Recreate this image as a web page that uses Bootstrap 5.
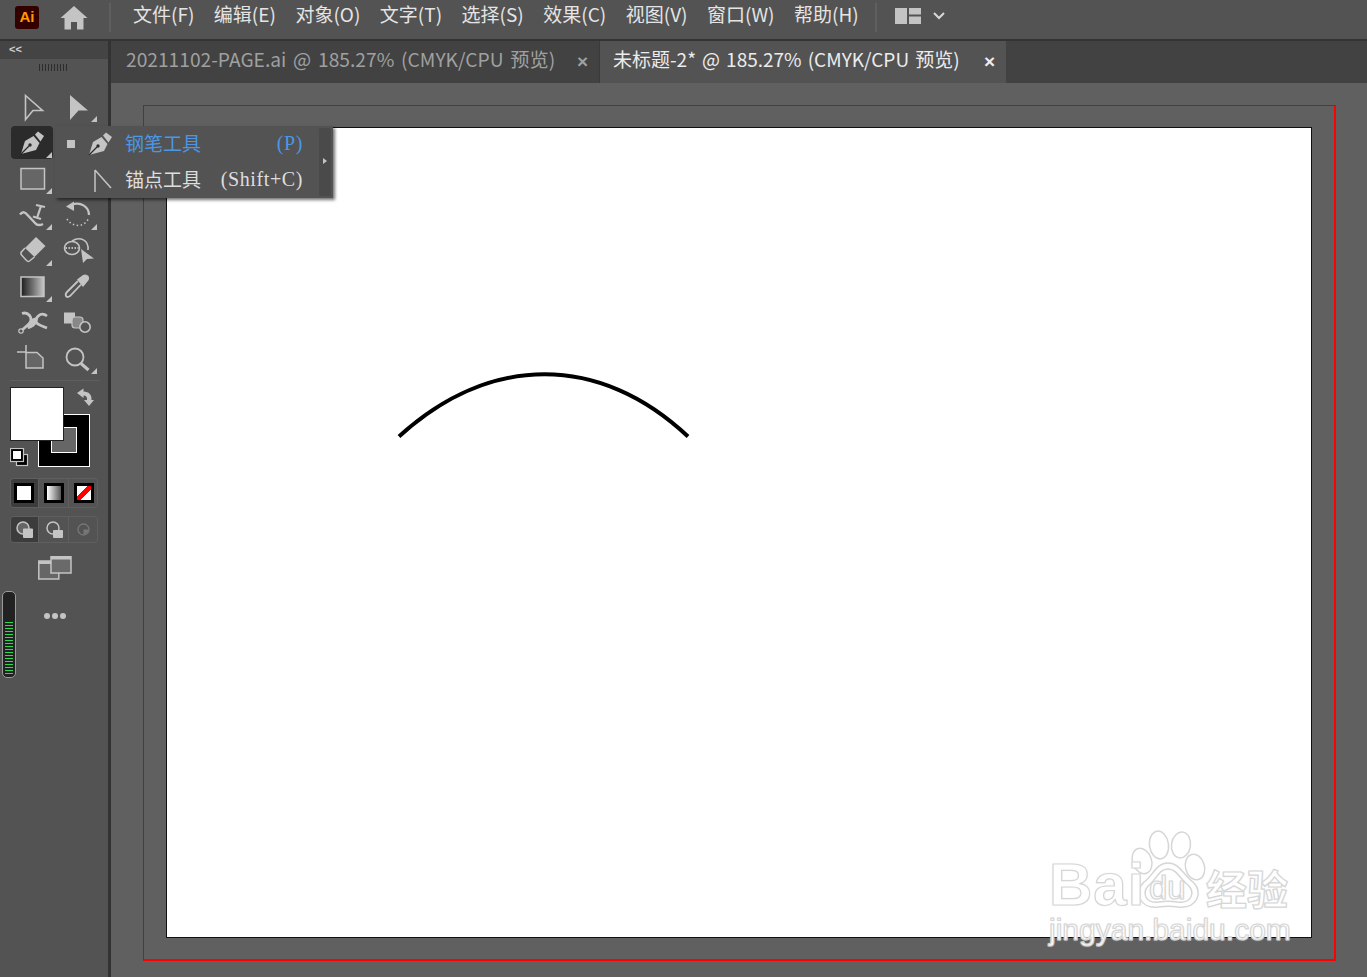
<!DOCTYPE html>
<html lang="zh-CN">
<head>
    <meta charset="UTF-8">
    <meta name="viewport" content="width=device-width, initial-scale=1.0">
    <title>Illustrator</title>
    <link href="https://cdn.jsdelivr.net/npm/bootstrap@5.3.0/dist/css/bootstrap.min.css" rel="stylesheet">
    <style>
        html, body { height: 100%; }
        body { background: #535353; color: #dedede; font-family: "Noto Sans CJK SC", "Noto Sans", sans-serif; overflow: hidden; }
        svg { display: block; }
        .ai-app { width: 1367px; height: 977px; }

        .ai-menubar { height: 41px; background: #535353; border-bottom: 2px solid #333; padding-bottom: 4px; flex: none; }
        .ai-logo { width: 24px; height: 23px; margin-left: 15px; background: #330000; border-radius: 3px; color: #ff9a00; font: bold 15px/21px "Liberation Sans", sans-serif; text-align: center; }
        .ai-home { margin-left: 21px; }
        .ai-vsep { width: 2px; height: 29px; background: #5f5f5f; }
        .ai-menu { gap: 19.5px; font-size: 19px; line-height: 30px; color: #e4e4e4; margin: 0 0 7px 22px; }
        .ai-menu span { white-space: nowrap; }

        .ai-toolbar { width: 111px; flex: none; border-right: 3px solid #333; background: #535353; }
        .ai-collapse { height: 18px; background: #444; color: #d0d0d0; font: bold 11px/16px "Liberation Sans", sans-serif; padding-left: 9px; }
        .ai-grip { height: 7px; width: 28px; margin: 5px 0 0 39px; background: repeating-linear-gradient(90deg, #2d2d2d 0 1px, transparent 1px 3px); }
        .ai-tools { display: grid; grid-template-columns: 45px 45px; grid-auto-rows: 36px; margin: 18px 0 0 10px; }
        .ai-tool { position: relative; }
        .ai-tool.is-active::before { content: ""; position: absolute; left: 1px; top: 1px; width: 42px; height: 33px; background: #2b2b2b; border-radius: 4px; }
        .ai-tool svg { position: relative; }
        .ai-rule { height: 1px; background: #5f5f5f; margin: 3px 8px 0 10px; }

        .ai-well { position: relative; height: 91px; margin-top: 6px; }
        .ai-fill { position: absolute; left: 10px; top: 0; width: 54px; height: 54px; background: #fff; border: 1px solid #222; z-index: 1; }
        .ai-stroke { position: absolute; left: 38px; top: 27px; width: 52px; height: 53px; background: #000; border: 1px solid #fff; }
        .ai-stroke::after { content: ""; position: absolute; left: 12px; top: 12px; width: 26px; height: 26px; background: #666; border: 1px solid #fff; }
        .ai-swap { position: absolute; left: 76px; top: 1px; }
        .ai-default { position: absolute; left: 10px; top: 61px; }

        .ai-seg { display: flex; height: 30px; width: 88px; margin-left: 10px; border: 1px solid #5f5f5f; border-radius: 4px; overflow: hidden; }
        .ai-seg > div { display: flex; align-items: center; border-left: 1px solid #5f5f5f; }
        .ai-seg > div:nth-child(1) { width: 27px; padding-left: 3px; border-left: 0; }
        .ai-seg > div:nth-child(2) { width: 30px; padding-left: 5px; }
        .ai-seg > div:nth-child(3) { width: 29px; padding-left: 5px; }
        .ai-draw > div:nth-child(1) { padding-left: 4px; }
        .ai-draw > div:nth-child(2) { padding-left: 6px; }
        .ai-draw > div:nth-child(3) { padding-left: 7px; }
        .ai-seg > div.is-on { background: #3c3c3c; }
        .ai-swatch { width: 20px; height: 20px; border: 3px solid #000; background: #fff; }
        .ai-swatch.grad { background: linear-gradient(90deg, #fff, #555); }
        .ai-swatch.none { background: linear-gradient(135deg, #fff 0 36%, #f00 36% 64%, #fff 64%); }
        .ai-draw { height: 27px; margin-top: 8px; }

        .ai-meter { width: 14px; height: 87px; margin-left: 2px; background: #222; border: 1px solid #9a9a9a; border-radius: 5px; padding: 30px 2px 3px; }
        .ai-meter div { height: 52px; background: repeating-linear-gradient(180deg, #2bdc50 0 1px, transparent 1px 3px); }
        .ai-dots { gap: 2px; margin: 22px 0 0 28px; height: 6px; }
        .ai-dots i { width: 6px; height: 6px; background: #c4c4c4; border-radius: 50%; }

        .ai-tabs { height: 42px; background: #424242; flex: none; }
        .ai-tab { height: 42px; line-height: 36px; white-space: nowrap; font-size: 19.200px; word-spacing: 2.500px; color: #a0a0a0; padding-left: 15px; position: relative; }
        .ai-tab.first { width: 488px; }
        .ai-tab.current { width: 407px; padding-left: 13px; font-size: 19px; word-spacing: 1.800px; background: #535353; color: #ececec; border-left: 1px solid #3a3a3a; }
        .ai-tab b { position: absolute; right: 11px; top: 0; font: bold 19px/41px "Liberation Sans", sans-serif; }

        .ai-canvas { background: #606060; position: relative; overflow: hidden; }
        .ai-bleed { position: absolute; left: 32px; top: 22px; width: 1193px; height: 856px; border: 1px solid #a01818; border-right: 2px solid #f00; border-bottom: 2px solid #f00; }
        .ai-board { position: absolute; left: 55px; top: 44px; width: 1146px; height: 811px; background: #fff; border: 1px solid #111; }
        .ai-curve { position: absolute; left: 0; top: 0; }

        .ai-flyout { position: absolute; left: 55px; top: 126px; width: 278px; height: 72px; background: #535353; box-shadow: 2px 2px 3px rgba(0,0,0,.55); z-index: 5; font-size: 19px; line-height: 34px; }
        .ai-fly-row { height: 36px; position: relative; padding-left: 70px; white-space: nowrap; }
        .ai-fly-row.blue { color: #4b96e6; }
        .ai-fly-row em { position: absolute; right: 30px; top: 0; font: 20px/34px "Liberation Serif", serif; letter-spacing: .6px; }
        .ai-bullet { position: absolute; left: 12px; top: 14px; width: 8px; height: 8px; background: #c4c4c4; }
        .ai-fly-icon { position: absolute; left: 23px; top: 0; }
        .ai-fly-strip { position: absolute; right: 2px; top: 2px; width: 12px; height: 68px; background: #4a4a4a; border-radius: 2px; }
        .ai-fly-strip::after { content: ""; position: absolute; left: 4px; top: 30px; border-left: 4px solid #c4c4c4; border-top: 3px solid transparent; border-bottom: 3px solid transparent; }

        .ai-wm { position: absolute; left: 0; top: 0; width: 1367px; height: 977px; pointer-events: none; z-index: 6; }
        .ai-wm span { position: absolute; color: #fff; -webkit-text-stroke: 1.2px #d6d6d6; text-shadow: 0 0 2px #ddd; white-space: nowrap; font-family: "Liberation Sans", sans-serif; }
        .wm-bai { left: 1049px; top: 850px; font-size: 60px; line-height: 70px; font-weight: bold; letter-spacing: 1px; }
        .wm-du { left: 1149px; top: 870px; font-size: 33px; line-height: 36px; }
        .wm-jy { left: 1206px; top: 860px; font-size: 41px; line-height: 54px; font-weight: bold; font-family: "Noto Sans CJK SC", sans-serif !important; }
        .wm-url { left: 1049px; top: 912px; font-size: 30px; line-height: 36px; }
    </style>
</head>
<body>
<svg width="0" height="0" class="position-absolute">
    <defs>
        <g id="pen-nib">
            <path d="M21 154 L25 141 L33.500 136 L39.500 143 L36 150 Z" fill="#c4c4c4"/>
            <path d="M21 154 L29 146" stroke="#2b2b2b" stroke-width="1.200"/>
            <circle cx="30" cy="145" r="1.700" fill="#2b2b2b"/>
            <path d="M35 134.500 L38 131.500 L44 136 L40.500 141.500 Z" fill="#c4c4c4"/>
        </g>
    </defs>
</svg>
<div class="ai-app d-flex flex-column">
    <div class="ai-menubar d-flex align-items-center">
        <div class="ai-logo">Ai</div>
        <svg class="ai-home" width="28" height="24" viewBox="60 7 28 24"><path d="M74 7 L87.500 19 L83.500 19 L83.500 30.500 L77 30.500 L77 23 L71 23 L71 30.500 L64.500 30.500 L64.500 19 L60.500 19 Z" fill="#c4c4c4"/></svg>
        <div class="ai-vsep" style="margin-left:21px"></div>
        <div class="ai-menu d-flex">
            <span>文件(F)</span><span>编辑(E)</span><span>对象(O)</span><span>文字(T)</span><span>选择(S)</span><span>效果(C)</span><span>视图(V)</span><span>窗口(W)</span><span>帮助(H)</span>
        </div>
        <div class="ai-vsep" style="margin-left:16px"></div>
        <svg style="margin-left:18px;margin-bottom:3px" width="52" height="18" viewBox="895 7 52 18">
            <path d="M895 8 h12 v16 h-12 Z M909 8 h12 v6.500 h-12 Z M909 16.500 h12 v7.500 h-12 Z" fill="#c4c4c4"/>
            <path d="M934 13 L939 18 L944 13" stroke="#d8d8d8" stroke-width="2" fill="none"/>
        </svg>
    </div>

    <div class="d-flex flex-grow-1">
        <div class="ai-toolbar">
            <div class="ai-collapse">&lt;&lt;</div>
            <div class="ai-grip"></div>
            <div class="ai-tools">
                <div class="ai-tool"><svg width="45" height="36" viewBox="10 89 45 36"><path d="M25.500 95.500 L42.500 110.500 L33 110.500 L25.500 119.500 Z" fill="none" stroke="#c4c4c4" stroke-width="1.600"/></svg></div>
                <div class="ai-tool"><svg width="45" height="36" viewBox="55 89 45 36"><path d="M70 95 L88 110.500 L78.500 110.500 L70 120 Z" fill="#c4c4c4"/><path d="M97 116 V122 H91 Z" fill="#c4c4c4"/></svg></div>

                <div class="ai-tool is-active"><svg width="45" height="36" viewBox="10 125 45 36"><use href="#pen-nib"/><path d="M52 152 V158 H46 Z" fill="#c4c4c4"/></svg></div>
                <div class="ai-tool"></div>

                <div class="ai-tool"><svg width="45" height="36" viewBox="10 161 45 36"><rect x="21" y="168.500" width="23.500" height="20.500" fill="#666" stroke="#c4c4c4" stroke-width="1.500"/><path d="M52 188 V194 H46 Z" fill="#c4c4c4"/></svg></div>
                <div class="ai-tool"></div>

                <div class="ai-tool"><svg width="45" height="36" viewBox="10 197 45 36"><path d="M20 214.500 C23 211 25 212 28 215.500 L35 223 C37 225.500 40 225.500 43 224" fill="none" stroke="#c4c4c4" stroke-width="2.400"/><path d="M36 205 L45 207 M41 206 L37 218 M33 216.500 L41 219" fill="none" stroke="#c4c4c4" stroke-width="2.200"/><path d="M52 224 V230 H46 Z" fill="#c4c4c4"/></svg></div>
                <div class="ai-tool"><svg width="45" height="36" viewBox="55 197 45 36"><path d="M72 204.500 C81 201.500 89 207 89 215" fill="none" stroke="#c4c4c4" stroke-width="2.200"/><path d="M66 206.500 L74 201.500 L74 211 Z" fill="#c4c4c4"/><path d="M88 219.500 C83 228 72 227 67 219" fill="none" stroke="#c4c4c4" stroke-width="1.500" stroke-dasharray="1.500 2.500"/><path d="M97 224 V230 H91 Z" fill="#c4c4c4"/></svg></div>

                <div class="ai-tool"><svg width="45" height="36" viewBox="10 233 45 36"><path d="M36 237 L45.500 246 L34.500 257 L25 248 Z" fill="#c4c4c4"/><path d="M25 248 L21 252.500 Q20.500 254 22 255.500 L26.500 260.500 Q28 262 29.500 261 L34.500 257" fill="none" stroke="#c4c4c4" stroke-width="1.500"/><path d="M52 260 V266 H46 Z" fill="#c4c4c4"/></svg></div>
                <div class="ai-tool"><svg width="45" height="36" viewBox="55 233 45 36"><g fill="none" stroke="#c4c4c4" stroke-width="1.600"><ellipse cx="72" cy="248" rx="7.500" ry="6.500"/><path d="M72 241 C80 236 89 240 88 250"/></g><path d="M65.500 248 h13" stroke="#e4e4e4" stroke-width="1.500" stroke-dasharray="1.500 1.500"/><path d="M81 249 L94 258.500 L87 259 L83 263 Z" fill="#c4c4c4"/></svg></div>

                <div class="ai-tool"><svg width="45" height="36" viewBox="10 269 45 36"><defs><linearGradient id="gtool"><stop offset="0" stop-color="#1c1c1c"/><stop offset=".55" stop-color="#777"/><stop offset="1" stop-color="#c8c8c8"/></linearGradient></defs><rect x="21" y="277" width="23" height="19.500" fill="url(#gtool)" stroke="#c4c4c4" stroke-width="1.500"/><path d="M52 296 V302 H46 Z" fill="#c4c4c4"/></svg></div>
                <div class="ai-tool"><svg width="45" height="36" viewBox="55 269 45 36"><path d="M81 284.500 L70 296 Q67 298 66 296 Q65 294 67 292 L78 281" fill="none" stroke="#c4c4c4" stroke-width="1.800"/><path d="M77 279.500 L83 275 Q86 273.500 88.500 276 Q90 279 87.500 281.500 L83 287 Z" fill="#c4c4c4"/></svg></div>

                <div class="ai-tool"><svg width="45" height="36" viewBox="10 305 45 36"><g fill="none" stroke="#c4c4c4" stroke-width="2.800"><path d="M22 313.500 C28 311.500 33 317 30 323 L21 331"/><path d="M47 316 C42 312 38 315 36 319 C34 323 39 325 47 328"/></g><path d="M27 326 C29 319 34 317 38 318 C38 323 34 328 28 329 Z" fill="#c4c4c4"/><circle cx="21" cy="331" r="2.200" fill="#535353" stroke="#c4c4c4" stroke-width="1.200"/></svg></div>
                <div class="ai-tool"><svg width="45" height="36" viewBox="55 305 45 36"><rect x="64" y="312.500" width="11" height="11" fill="#c4c4c4"/><rect x="72" y="317" width="11" height="11" rx="3" fill="#888" stroke="#c4c4c4" stroke-width="1.200"/><circle cx="85" cy="327" r="5.200" fill="#535353" stroke="#c4c4c4" stroke-width="1.600"/></svg></div>

                <div class="ai-tool"><svg width="45" height="36" viewBox="10 341 45 36"><path d="M17 352 h9 M26 345 v7" stroke="#c4c4c4" stroke-width="1.500" fill="none"/><path d="M26 352.500 H37 L43 358 V368 H26 Z" fill="#666" stroke="#c4c4c4" stroke-width="1.500"/></svg></div>
                <div class="ai-tool"><svg width="45" height="36" viewBox="55 341 45 36"><circle cx="75" cy="357" r="8.500" fill="none" stroke="#c4c4c4" stroke-width="1.800"/><path d="M81 363.500 L88.500 370" stroke="#c4c4c4" stroke-width="3"/><path d="M97 368 V374 H91 Z" fill="#c4c4c4"/></svg></div>
            </div>
            <div class="ai-rule"></div>

            <div class="ai-well">
                <div class="ai-fill"></div>
                <div class="ai-stroke"></div>
                <svg class="ai-swap" width="18" height="18" viewBox="76 388 18 18"><path d="M77 393 L83.500 388.500 L83.500 391.500 C89 391.500 92 395 91.500 400 L94 400 L89 406 L84 400 L87 400 C87.500 397 86 395.500 83.500 395.500 L83.500 398 Z" fill="#c4c4c4"/></svg>
                <svg class="ai-default" width="19" height="19" viewBox="10 449 19 19"><rect x="16.500" y="455.500" width="11" height="11" fill="#000" stroke="#c4c4c4" stroke-width="1.200"/><rect x="10.500" y="449.500" width="13" height="13" fill="#000" stroke="#c4c4c4" stroke-width="1.200"/><rect x="13" y="452" width="8" height="8" fill="#fff"/></svg>
            </div>

            <div class="ai-seg">
                <div class="is-on"><div class="ai-swatch"></div></div>
                <div><div class="ai-swatch grad"></div></div>
                <div><div class="ai-swatch none"></div></div>
            </div>
            <div class="ai-seg ai-draw">
                <div class="is-on"><svg width="20" height="20" viewBox="15 519 20 20"><circle cx="23" cy="527" r="6" fill="#666" stroke="#c4c4c4" stroke-width="1.500"/><rect x="23" y="527.500" width="10" height="9.500" rx="1" fill="#c4c4c4"/></svg></div>
                <div><svg width="20" height="20" viewBox="45 519 20 20"><circle cx="53" cy="527" r="6" fill="none" stroke="#c4c4c4" stroke-width="1.500"/><rect x="53" y="529" width="10" height="8" rx="1" fill="#c4c4c4"/></svg></div>
                <div><svg width="16" height="16" viewBox="76 521 16 16"><circle cx="83.500" cy="528.500" r="5.500" fill="none" stroke="#777" stroke-width="1.300"/><path d="M83.500 528.500 h5 a5 5 0 0 1 -5 5 Z" fill="#777"/></svg></div>
            </div>
            <svg class="d-block" style="margin:13px 0 0 38px" width="34" height="24" viewBox="38 556 34 24"><rect x="38.800" y="561" width="20" height="18" fill="#666" stroke="#c4c4c4" stroke-width="1.500"/><rect x="38.800" y="561" width="20" height="3" fill="#c4c4c4"/><rect x="51" y="556.500" width="20" height="16.500" fill="#6a6a6a" stroke="#c4c4c4" stroke-width="1.500"/><rect x="51" y="556.500" width="20" height="3" fill="#c4c4c4"/></svg>
            <div class="d-flex" style="margin-top:11px">
                <div class="ai-meter"><div></div></div>
                <div class="ai-dots d-flex"><i></i><i></i><i></i></div>
            </div>
        </div>

        <div class="d-flex flex-column flex-grow-1">
            <div class="ai-tabs d-flex">
                <div class="ai-tab first">20211102-PAGE.ai @ 185.27% (CMYK/CPU 预览)<b>×</b></div>
                <div class="ai-tab current">未标题-2* @ 185.27% (CMYK/CPU 预览)<b>×</b></div>
            </div>
            <div class="ai-canvas flex-grow-1">
                <div class="ai-bleed"></div>
                <div class="ai-board">
                    <svg class="ai-curve" width="1145" height="810" viewBox="167 128 1145 810"><path d="M399 436.500 C490 353.500 600 353.500 688 436.500" fill="none" stroke="#000" stroke-width="4"/></svg>
                </div>
            </div>
        </div>
    </div>
</div>

<div class="ai-flyout">
    <div class="ai-fly-row blue">
        <span class="ai-bullet"></span>
        <svg class="ai-fly-icon" width="40" height="36" viewBox="10 125 40 36"><use href="#pen-nib"/></svg>
        钢笔工具<em>(P)</em>
    </div>
    <div class="ai-fly-row">
        <svg class="ai-fly-icon" style="left:30px" width="30" height="36" viewBox="85 161 30 36"><path d="M95 169 V191 M95 169 L111 187" stroke="#c4c4c4" stroke-width="1.500" fill="none"/></svg>
        锚点工具<em>(Shift+C)</em>
    </div>
    <div class="ai-fly-strip"></div>
</div>

<div class="ai-wm">
    <svg class="position-absolute" style="left:0;top:0" width="1367" height="977" viewBox="0 0 1367 977">
        <g fill="#fff" stroke="#d6d6d6" stroke-width="1.500">
            <ellipse cx="1159" cy="845" rx="9.500" ry="14" transform="rotate(-8 1159 845)"/>
            <ellipse cx="1181" cy="845" rx="9.500" ry="13" transform="rotate(8 1181 845)"/>
            <ellipse cx="1142" cy="861" rx="9.500" ry="13" transform="rotate(-20 1142 861)"/>
            <ellipse cx="1195" cy="867" rx="9.500" ry="13" transform="rotate(-15 1195 867)"/>
            <path d="M1168 863 C1180 863 1184 876 1193 882 C1204 892 1197 909 1178 907 C1172 906 1165 906 1158 907 C1140 909 1133 892 1144 882 C1153 876 1156 863 1168 863 Z"/>
            <path d="M1168 869 C1177 869 1180 879 1188 885 C1196 893 1191 904 1177 902 C1171 901 1165 901 1159 902 C1146 904 1141 893 1149 885 C1157 879 1159 869 1168 869 Z"/>
        </g>
    </svg>
    <span class="wm-bai">Bai</span>
    <span class="wm-du">du</span>
    <span class="wm-jy">经验</span>
    <span class="wm-url">jingyan.baidu.com</span>
</div>
</body>
</html>
